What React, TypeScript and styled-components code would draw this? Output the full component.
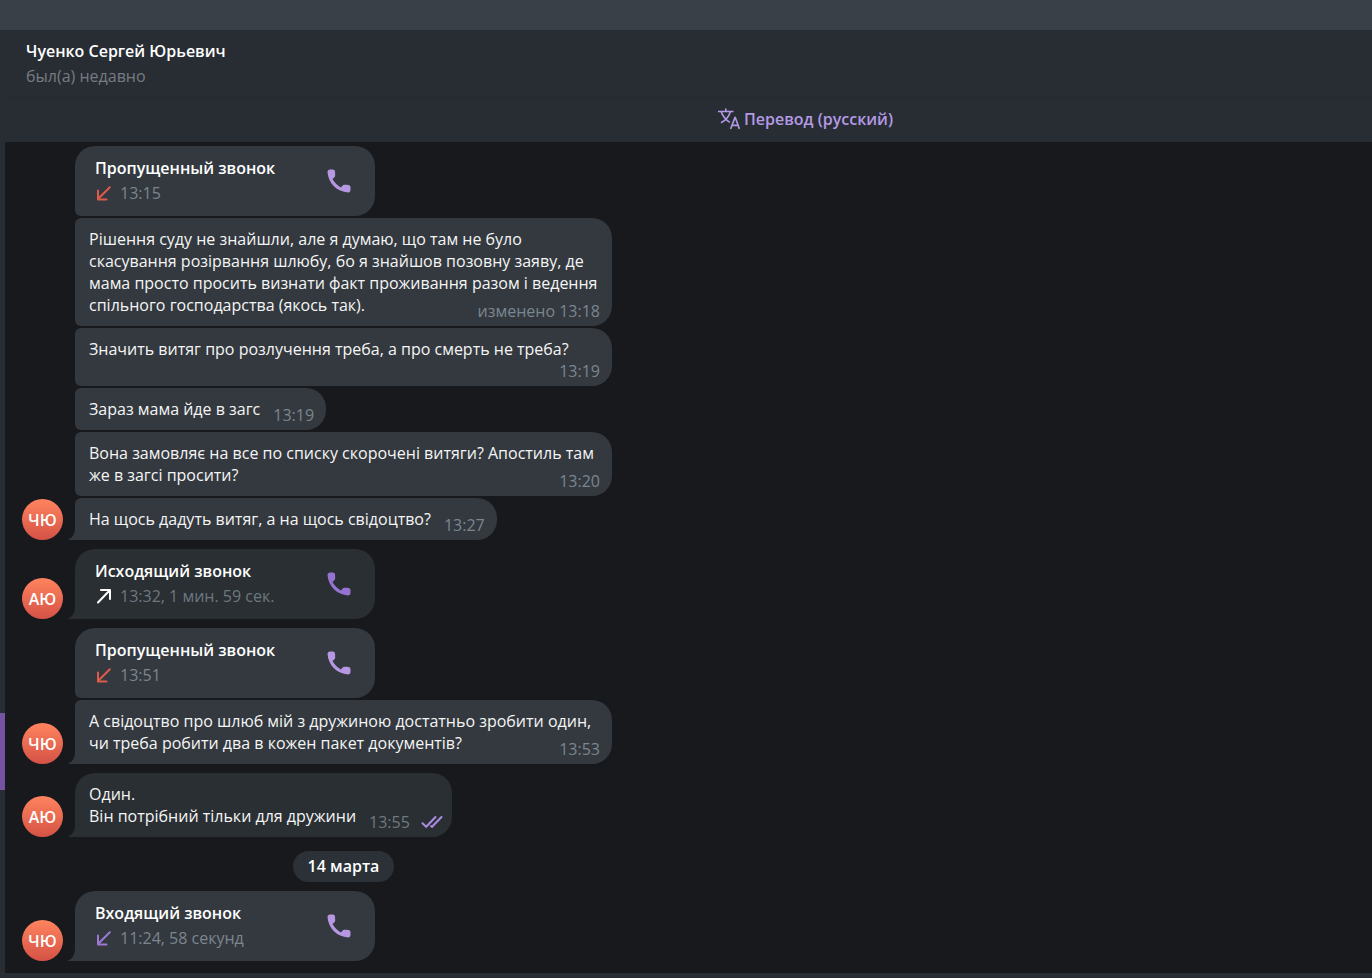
import React from "react";
import styled, { createGlobalStyle, css } from "styled-components";

const Global = createGlobalStyle`
  * { box-sizing: border-box; }
  body {
    margin: 0;
    background: #18191d;
    color: #f5f5f5;
    font: 400 16px/22px "Open Sans", "Noto Sans", sans-serif;
  }
  p, h1, h2 { margin: 0; font-size: 16px; font-weight: 400; }
`;

const Page = styled.div`
  min-height: 100vh;
  display: flex;
  flex-direction: column;
`;

const TitleBar = styled.div`
  height: 30px;
  background: #3a4047;
`;

const Body = styled.div`
  flex: 1;
  display: flex;
`;

const ChatListEdge = styled.aside`
  width: 5px;
  flex: none;
  padding-top: 683px;
  background: #282d34;
`;

const ActiveChat = styled.div`
  height: 77px;
  background: #7653a2;
`;

const Main = styled.main`
  flex: 1;
  min-width: 0;
  display: flex;
  flex-direction: column;
`;

const Header = styled.header`
  height: 68px;
  padding: 10px 20px 0 21px;
  background: #282d33;
  border-bottom: 1px solid #24292d;
`;

const PeerName = styled.h1`
  && { font-weight: 600; }
  color: #ffffff;
`;

const PeerStatus = styled.p`
  margin-top: 3px;
  color: #777c82;
`;

const TranslateBar = styled.button`
  height: 44px;
  padding: 0 0 2px 234px;
  display: flex;
  align-items: center;
  justify-content: center;
  gap: 4px;
  border: 0;
  background: #282d33;
  color: #b39ae4;
  font: inherit;
  font-weight: 600;
`;

const History = styled.section`
  flex: 1;
  padding: 4px 16px 12px 17px;
  display: flex;
  flex-direction: column;
  gap: 9px;
`;

const Group = styled.div`
  display: flex;
  align-items: flex-end;
  gap: 12px;
`;

const Avatar = styled.div`
  width: 41px;
  height: 41px;
  flex: none;
  border-radius: 50%;
  background: linear-gradient(#ff845e, #d45246);
  color: #ffffff;
  font-weight: 600;
  line-height: 42px;
  text-align: center;
`;

const Stack = styled.div`
  display: flex;
  flex-direction: column;
  align-items: flex-start;
  gap: 2px;
`;

type BubbleProps = { $out?: boolean; $first?: boolean; $last?: boolean };

const bubble = css<BubbleProps>`
  position: relative;
  background: ${(p) => (p.$out ? "#2a2f33" : "#33393f")};
  border-radius: ${(p) => (p.$first ? 20 : 6)}px 20px 20px ${(p) => (p.$last ? 0 : 6)}px;
`;

const TailShape = styled.svg<{ $out?: boolean }>`
  position: absolute;
  left: -7px;
  bottom: 0;
  fill: ${(p) => (p.$out ? "#2a2f33" : "#33393f")};
`;

const CallBubble = styled.article<BubbleProps>`
  ${bubble}
  width: 300px;
  height: 70px;
  padding: 0 24px 0 20px;
  display: flex;
  align-items: center;
  justify-content: space-between;
`;

const CallDetails = styled.div`
  padding-bottom: 2px;
`;

const CallTitle = styled.h2`
  && { font-weight: 600; }
  color: #ffffff;
`;

const CallInfo = styled.p<{ $out?: boolean }>`
  margin-top: 3px;
  display: flex;
  align-items: center;
  gap: 7px;
  color: ${(p) => (p.$out ? "#6d7880" : "#7b868f")};
`;

const CallButton = styled.button<{ $out?: boolean }>`
  padding: 0;
  display: flex;
  border: 0;
  background: none;
  color: ${(p) => (p.$out ? "#9673d1" : "#b698e2")};
`;

const TextBubble = styled.article<BubbleProps & { $wide?: boolean }>`
  ${bubble}
  display: grid;
  padding: 0 12px 0 14px;
  ${(p) =>
    p.$wide
      ? css`width: 537px;`
      : css`
          grid-template-columns: auto auto;
          column-gap: 13px;
        `}
`;

const MessageText = styled.div<{ $ownLineMeta?: boolean }>`
  grid-row: 1;
  grid-column: 1;
  padding: 10px 0 ${(p) => (p.$ownLineMeta ? 26 : 10)}px;
`;

const Line = styled.p`
  width: fit-content;
  white-space: nowrap;
`;

const Meta = styled.p<{ $wide?: boolean; $out?: boolean }>`
  grid-row: 1;
  grid-column: ${(p) => (p.$wide ? 1 : 2)};
  align-self: end;
  justify-self: end;
  display: flex;
  align-items: center;
  gap: 11px;
  padding-bottom: 4px;
  margin-right: ${(p) => (p.$out ? -3 : 0)}px;
  color: ${(p) => (p.$out ? "#6d7880" : "#7b868f")};
`;

const DateRow = styled.div`
  width: 537px;
  margin: 5px 0 0 53px;
  display: flex;
  justify-content: center;
`;

const DatePill = styled.time`
  height: 31px;
  padding: 0 15px;
  border-radius: 16px;
  background: #2c3137;
  color: #ffffff;
  font-weight: 600;
  line-height: 31px;
`;

const Composer = styled.footer`
  height: 5px;
  background: #282d33;
`;

const TranslateIcon = () => (
  <svg width="22" height="22" viewBox="0 0 22 22" fill="none" stroke="currentColor" strokeWidth="1.6" aria-hidden="true">
    <path d="M0 3.5h15.5M7.8 0.5v3M3.2 3.8c1.6 4.6 5 8.3 8.6 10.6M12.4 3.8c-1.6 5-5 8.8-9.4 11" />
    <path d="M12.6 21l4.3-11.4h.4L21.4 21M14 17.4h6.2" />
  </svg>
);

const PhoneIcon = () => (
  <svg width="24" height="24" viewBox="0 0 24 24" fill="currentColor" aria-hidden="true">
    <path d="M3 .5h2.800C7 .5 7.900 1.300 8 2.500c.1 1.300.2 2.600.2 3.700 0 1.100-.5 1.900-1.300 2.600L5.500 10c1.900 3.600 4.800 6.500 8.500 8.500l1.200-1.400c.7-.8 1.500-1.300 2.600-1.300 1.100 0 2.400.1 3.700.3 1.200.1 2 1 2 2.100V21c0 1.400-1 2.400-2.400 2.400C10 22.700 1.200 14 .5 2.900.5 1.500 1.600.5 3 .5z" />
  </svg>
);

const arrowColors = { missed: "#de5b4a", incoming: "#9b79d3", outgoing: "#ffffff" };
type Direction = keyof typeof arrowColors;

const ArrowIcon = ({ direction }: { direction: Direction }) => (
  <svg
    width="18"
    height="18"
    viewBox="0 0 18 18"
    fill="none"
    stroke={arrowColors[direction]}
    strokeWidth="2"
    strokeLinecap="round"
    strokeLinejoin="round"
    aria-hidden="true"
  >
    {direction === "outgoing" ? (
      <path d="M3 15.500L14.800 3.200M6 3h9v9" />
    ) : (
      <path d="M14.800 3.200L3 15M3 6.500v9h8.500" />
    )}
  </svg>
);

const ReadIcon = () => (
  <svg width="22" height="14" viewBox="0 0 22 14" fill="none" stroke="#a98be0" strokeWidth="2" strokeLinecap="round" aria-hidden="true">
    <path d="M1.500 8.200l3.700 3.600L14.500 2M10 11l1 .8L20.500 2" />
  </svg>
);

const Tail = ({ out }: { out?: boolean }) => (
  <TailShape $out={out} width="8" height="13" viewBox="0 0 8 13" aria-hidden="true">
    <path d="M8 0H7C7 6 5 10.500.5 12.200C0 12.500 0 13 .6 13H8z" />
  </TailShape>
);

type CallProps = { title: string; info: string; direction: Direction; out?: boolean; first?: boolean; last?: boolean };

const Call = ({ title, info, direction, out, first, last }: CallProps) => (
  <CallBubble $out={out} $first={first} $last={last}>
    <CallDetails>
      <CallTitle>{title}</CallTitle>
      <CallInfo $out={out}>
        <ArrowIcon direction={direction} />
        {info}
      </CallInfo>
    </CallDetails>
    <CallButton $out={out} aria-label="Позвонить">
      <PhoneIcon />
    </CallButton>
    {last && <Tail out={out} />}
  </CallBubble>
);

type MessageProps = {
  lines: string[];
  time: string;
  wide?: boolean;
  ownLineMeta?: boolean;
  out?: boolean;
  first?: boolean;
  last?: boolean;
};

const Message = ({ lines, time, wide, ownLineMeta, out, first, last }: MessageProps) => (
  <TextBubble $out={out} $first={first} $last={last} $wide={wide}>
    <MessageText $ownLineMeta={ownLineMeta}>
      {lines.map((line) => (
        <Line key={line}>{line}</Line>
      ))}
    </MessageText>
    <Meta $wide={wide} $out={out}>
      {time}
      {out && <ReadIcon />}
    </Meta>
    {last && <Tail out={out} />}
  </TextBubble>
);

export default function App() {
  return (
    <>
      <Global />
      <Page>
        <TitleBar />
        <Body>
          <ChatListEdge>
            <ActiveChat />
          </ChatListEdge>
          <Main>
            <Header>
              <PeerName>Чуенко Сергей Юрьевич</PeerName>
              <PeerStatus>был(а) недавно</PeerStatus>
            </Header>
            <TranslateBar>
              <TranslateIcon />
              Перевод (русский)
            </TranslateBar>
            <History>
              <Group>
                <Avatar>ЧЮ</Avatar>
                <Stack>
                  <Call title="Пропущенный звонок" info="13:15" direction="missed" first />
                  <Message
                    wide
                    time="изменено 13:18"
                    lines={[
                      "Рішення суду не знайшли, але я думаю, що там не було",
                      "скасування розірвання шлюбу, бо я знайшов позовну заяву, де",
                      "мама просто просить визнати факт проживання разом і ведення",
                      "спільного господарства (якось так).",
                    ]}
                  />
                  <Message wide ownLineMeta time="13:19" lines={["Значить витяг про розлучення треба, а про смерть не треба?"]} />
                  <Message time="13:19" lines={["Зараз мама йде в загс"]} />
                  <Message
                    wide
                    time="13:20"
                    lines={["Вона замовляє на все по списку скорочені витяги? Апостиль там", "же в загсі просити?"]}
                  />
                  <Message last time="13:27" lines={["На щось дадуть витяг, а на щось свідоцтво?"]} />
                </Stack>
              </Group>
              <Group>
                <Avatar>АЮ</Avatar>
                <Call title="Исходящий звонок" info="13:32, 1 мин. 59 сек." direction="outgoing" out first last />
              </Group>
              <Group>
                <Avatar>ЧЮ</Avatar>
                <Stack>
                  <Call title="Пропущенный звонок" info="13:51" direction="missed" first />
                  <Message
                    wide
                    last
                    time="13:53"
                    lines={["А свідоцтво про шлюб мій з дружиною достатньо зробити один,", "чи треба робити два в кожен пакет документів?"]}
                  />
                </Stack>
              </Group>
              <Group>
                <Avatar>АЮ</Avatar>
                <Message out first last time="13:55" lines={["Один.", "Він потрібний тільки для дружини"]} />
              </Group>
              <DateRow>
                <DatePill>14 марта</DatePill>
              </DateRow>
              <Group>
                <Avatar>ЧЮ</Avatar>
                <Call title="Входящий звонок" info="11:24, 58 секунд" direction="incoming" first last />
              </Group>
            </History>
            <Composer />
          </Main>
        </Body>
      </Page>
    </>
  );
}
